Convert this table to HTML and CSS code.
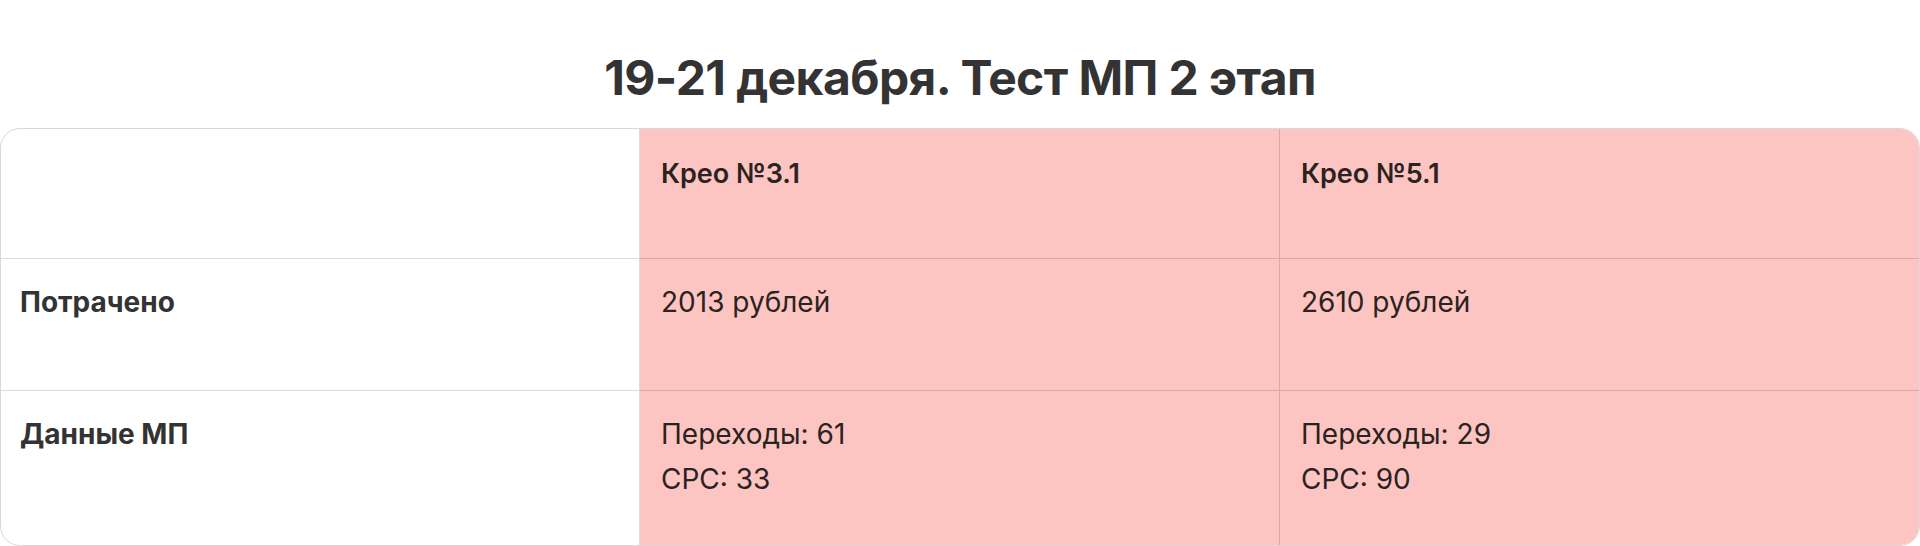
FILE: index.html
```html
<!DOCTYPE html>
<html lang="ru">
<head>
<meta charset="utf-8">
<title>Тест МП 2 этап</title>
<link rel="stylesheet" href="styles.css">
</head>
<body>
<h1 class="title">19-21 декабря. Тест МП 2 этап</h1>
<div class="table">
  <div class="cell label"></div>
  <div class="cell pink head">Крео №3.1</div>
  <div class="cell pink head last">Крео №5.1</div>

  <div class="cell label">Потрачено</div>
  <div class="cell pink">2013 рублей</div>
  <div class="cell pink last">2610 рублей</div>

  <div class="cell label bottom">Данные МП</div>
  <div class="cell pink bottom"><p>Переходы: 61</p><p>CPC: 33</p></div>
  <div class="cell pink bottom last"><p>Переходы: 29</p><p>CPC: 90</p></div>
</div>
</body>
</html>
```
FILE: styles.css
```css
html, body {
  margin: 0;
  padding: 0;
  background: #ffffff;
}
body {
  font-family: Inter, "Noto Sans", sans-serif;
  color: #333333;
  height: 546px;
  overflow: hidden;
}
.title {
  margin: 0;
  padding-top: 50px;
  height: 55px;
  margin-bottom: 23px;
  font-size: 48px;
  line-height: 55px;
  font-weight: 700;
  letter-spacing: -0.6px;
  text-align: center;
  color: #333333;
}
.table {
  display: grid;
  grid-template-columns: 639px 640px 1fr;
  grid-template-rows: 130px 132px 1fr;
  height: 418px;
  box-sizing: border-box;
  border: 1px solid #d9d9d9;
  border-radius: 20px;
  overflow: hidden;
}
.cell {
  box-sizing: border-box;
  padding: 21px 21px;
  font-size: 28px;
  line-height: 45px;
  border-right: 1px solid #dcdcdc;
  border-bottom: 1px solid #dcdcdc;
  color: #2f2a2a;
}
.cell p {
  margin: 0;
}
.label {
  font-weight: 700;
  color: #333333;
  padding-left: 19px;
}
.pink {
  background: #fdc5c1;
  border-color: #dba6a3;
  color: #2b2222;
}
.head {
  font-weight: 600;
  font-size: 27px;
  padding-top: 22px;
}
.last {
  border-right: none;
}
.bottom {
  border-bottom: none;
}
```
